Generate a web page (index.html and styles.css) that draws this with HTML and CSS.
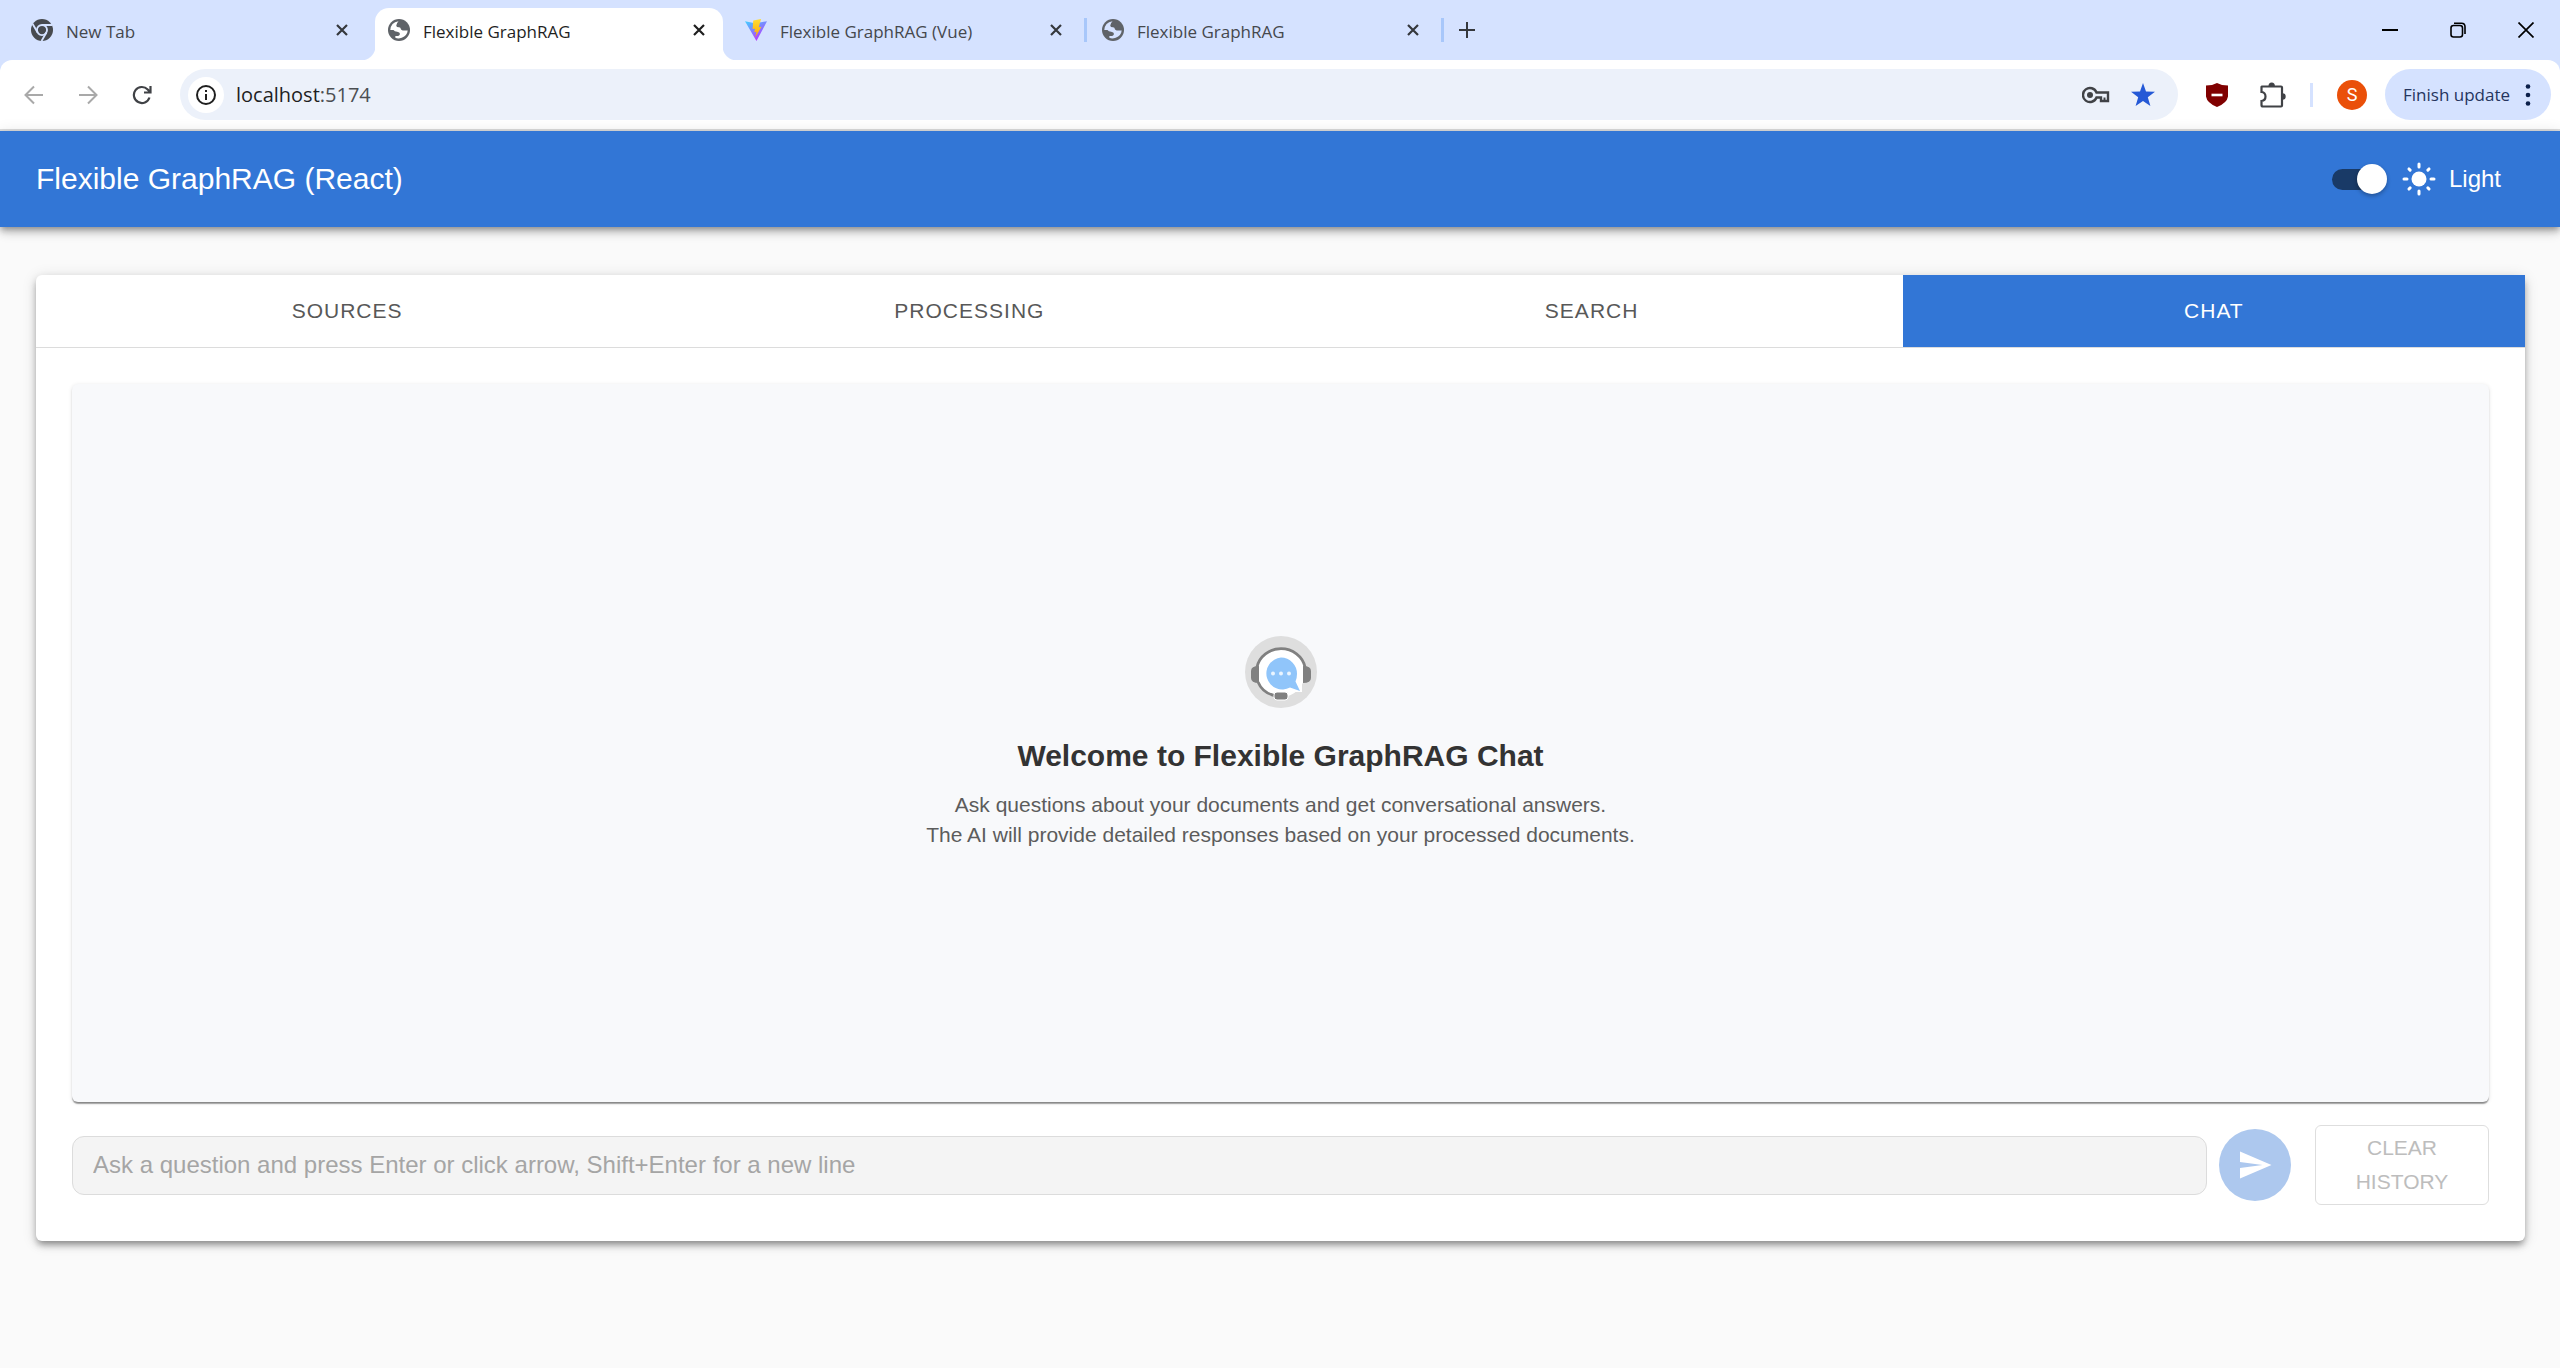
FILE: index.html
```html
<!DOCTYPE html>
<html lang="en">
<head>
<meta charset="utf-8">
<title>Flexible GraphRAG</title>
<link rel="stylesheet" href="styles.css">
</head>
<body>
<svg width="0" height="0" class="defs" aria-hidden="true">
  <defs>
    <symbol id="close" viewBox="0 0 12 12"><path d="M1 1l10 10M11 1L1 11" fill="none" stroke="currentColor" stroke-width="2.200"/></symbol>
    <symbol id="globe" viewBox="0 0 24 24"><circle cx="12" cy="12" r="12" fill="#5f6368"/><path class="sea" d="M2.500 12Q3 4 11.500 2.500 9 5 9 7q0 2 3 2 2 0 2 2 0 1 2 1.500l5.500 0Q21 18 15 20.500q-4 1.500-7 0v-2q5 .5 5-2.500 0-1.500-3-2-3 0-4-2z"/></symbol>
  </defs>
</svg>
<div class="tabstrip">
  <div class="tab">
    <svg class="fav" viewBox="0 0 24 24"><circle cx="12" cy="12" r="12" fill="#474a4f"/><circle cx="12" cy="12" r="5.500" fill="#474a4f" stroke="#d5e2ff" stroke-width="2"/><path d="M12 6.500h11M7.200 14.800L1.800 5.500M16.800 14.800L11.500 24" stroke="#d5e2ff" stroke-width="2" fill="none"/></svg>
    <span class="tab-title">New Tab</span>
    <button class="icon-btn" aria-label="Close tab"><svg class="x"><use href="#close"/></svg></button>
  </div>
  <div class="tab active">
    <svg class="fav"><use href="#globe"/></svg>
    <span class="tab-title">Flexible GraphRAG</span>
    <button class="icon-btn" aria-label="Close tab"><svg class="x"><use href="#close"/></svg></button>
  </div>
  <div class="tab divided">
    <svg class="fav" viewBox="0 0 24 24"><defs><linearGradient id="va" x1="0" y1="0" x2=".6" y2="1"><stop offset="0" stop-color="#41d1ff"/><stop offset="1" stop-color="#bd34fe"/></linearGradient><linearGradient id="vb" x1="0" y1="0" x2="0" y2="1"><stop offset="0" stop-color="#ffdd35"/><stop offset="1" stop-color="#ffa800"/></linearGradient></defs><path d="M0 2.500l11 2L24 2.500 12.500 24z" fill="url(#va)"/><path d="M17.500 0L9 1.700 8.300 11l2.700-.5-.9 4 2.500-.7-1.400 6L18 8.500l-3 .5 2.500-9z" fill="url(#vb)"/></svg>
    <span class="tab-title">Flexible GraphRAG (Vue)</span>
    <button class="icon-btn" aria-label="Close tab"><svg class="x"><use href="#close"/></svg></button>
  </div>
  <div class="tab divided">
    <svg class="fav"><use href="#globe"/></svg>
    <span class="tab-title">Flexible GraphRAG</span>
    <button class="icon-btn" aria-label="Close tab"><svg class="x"><use href="#close"/></svg></button>
  </div>
  <button class="icon-btn new-tab" aria-label="New tab"><svg width="16" height="16" viewBox="0 0 16 16"><path d="M8 0v16M0 8h16" stroke="#35383d" stroke-width="2"/></svg></button>
  <div class="window-controls">
    <button class="icon-btn" aria-label="Minimize"><svg width="16" height="16" viewBox="0 0 16 16"><path d="M0 8h16" stroke="#000" stroke-width="2"/></svg></button>
    <button class="icon-btn" aria-label="Restore"><svg width="16" height="16" viewBox="0 0 16 16"><g fill="none" stroke="#000" stroke-width="1.600"><rect x="1" y="3.500" width="11.500" height="11.500" rx="2.500"/><path d="M4 1.200h7.500q3.500 0 3.500 3.500V12"/></g></svg></button>
    <button class="icon-btn" aria-label="Close window"><svg width="16" height="16" viewBox="0 0 16 16"><path d="M.5.5l15 15M15.500.5l-15 15" stroke="#000" stroke-width="1.700"/></svg></button>
  </div>
</div>
<div class="toolbar">
  <nav class="nav-buttons" aria-label="History">
    <button class="icon-btn" aria-label="Back"><svg width="20" height="20" viewBox="0 0 20 20"><path d="M19 10H2M10 1.500L1.500 10l8.500 8.500" fill="none" stroke="#a9a9a9" stroke-width="2"/></svg></button>
    <button class="icon-btn" aria-label="Forward"><svg width="20" height="20" viewBox="0 0 20 20"><path d="M1 10h17M10 1.500l8.500 8.500-8.500 8.500" fill="none" stroke="#a9a9a9" stroke-width="2"/></svg></button>
    <button class="icon-btn" aria-label="Reload"><svg width="20" height="20" viewBox="0 0 20 20"><path d="M17.500 12.500A8 8 0 1 1 15.700 4.500L18 7M18.500 1v6.500H12" fill="none" stroke="#404246" stroke-width="2.200"/></svg></button>
  </nav>
  <div class="address">
    <span class="site-info"><svg width="20" height="20" viewBox="0 0 20 20"><circle cx="10" cy="10" r="9" fill="none" stroke="#1f1f1f" stroke-width="2"/><path d="M10 9v6M10 5v2" stroke="#1f1f1f" stroke-width="2"/></svg></span>
    <span class="url">localhost<span>:5174</span></span>
    <svg width="28" height="18" viewBox="0 0 28 18"><path d="M14.500 6.500a7 7 0 1 0 0 5H19V15h7V6.500z" fill="none" stroke="#404246" stroke-width="2.400"/><circle cx="8" cy="9" r="3" fill="#404246"/><path d="M22.500 15v-3.500" stroke="#404246" stroke-width="2"/></svg>
    <svg class="star" width="24" height="24" viewBox="0 0 24 24"><path d="M12 0l3 8.600 9 .2-7.200 5.500L19.400 23 12 17.900 4.600 23l2.600-8.700L0 8.800l9-.2z" fill="#2559d6"/></svg>
  </div>
  <div class="extensions">
    <svg width="22" height="24" viewBox="0 0 22 24"><path d="M11 0q4.500 2.500 11 2.500v11Q21 20 11 24 1 20 0 13.500v-11Q6.500 2.500 11 0z" fill="#800000"/><path d="M5.500 12h11" stroke="#fff" stroke-width="2.600"/></svg>
    <svg width="26" height="26" viewBox="0 0 26 26"><path d="M2 4.500h19a1 1 0 0 1 1 1v18a1 1 0 0 1-1 1H3a1.500 1.500 0 0 1-1.500-1.500V19q4-.5 4-4.500t-4-4.500V5z" fill="none" stroke="#404246" stroke-width="2.200"/><path d="M8.500 4a3.200 3.500 0 0 1 6.400 0zM22.500 11.300a3.200 3.200 0 0 1 0 6.400z" fill="#404246"/></svg>
    <span class="rule"></span>
    <span class="avatar">S</span>
    <button class="update">Finish update <svg width="6" height="22" viewBox="0 0 6 22"><g fill="#0b1f4a"><circle cx="3" cy="2.500" r="2.300"/><circle cx="3" cy="11" r="2.300"/><circle cx="3" cy="19.500" r="2.300"/></g></svg></button>
  </div>
</div>
<header class="appbar">
  <h1>Flexible GraphRAG (React)</h1>
  <label class="theme">
    <input type="checkbox" class="switch" checked>
    <svg width="36" height="36" viewBox="0 0 24 24"><circle cx="12" cy="12" r="5" fill="#fff"/><path d="M12 2v2M12 20v2M2 12h2M20 12h2M5.300 5.300l.8.8M17.900 17.900l.8.8M5.300 18.700l.8-.8M17.900 6.100l.8-.8" stroke="#fff" stroke-width="2" stroke-linecap="round"/></svg>
    <span>Light</span>
  </label>
</header>
<main class="card">
  <div class="sections" role="tablist">
    <button role="tab">SOURCES</button>
    <button role="tab">PROCESSING</button>
    <button role="tab">SEARCH</button>
    <button role="tab" aria-selected="true" class="selected">CHAT</button>
  </div>
  <div class="panel">
    <section class="conversation">
      <svg class="bot" viewBox="0 0 72 72"><circle cx="36" cy="36" r="36" fill="#dedede"/><circle cx="36" cy="37" r="24" fill="#fff"/><path d="M44 56h13V44z" fill="#fff"/><path d="M12 31a24.500 23 0 0 1 48 0M13 46q5 12 19 14" fill="none" stroke="#808080" stroke-width="2.800"/><path d="M14 30v17q-8 0-8-5v-7q0-5 8-5zM58 30v17q8 0 8-5v-7q0-5-8-5z" fill="#808080"/><rect x="29" y="56" width="14" height="8" rx="3" fill="#808080" stroke="#fff" stroke-width="1"/><path d="M36 21.500a16.300 16.300 0 0 1 16 16.500q0 4-1.500 7.500L55 55l-10-3.500a16 16 0 1 1-9-30z" fill="#90c5fa"/><g fill="#eaf5ff"><circle cx="28" cy="37.500" r="2"/><circle cx="36" cy="37.500" r="2"/><circle cx="44" cy="37.500" r="2"/></g></svg>
      <h2>Welcome to Flexible GraphRAG Chat</h2>
      <p>Ask questions about your documents and get conversational answers.<br>The AI will provide detailed responses based on your processed documents.</p>
    </section>
    <form class="composer">
      <input type="text" aria-label="Question" placeholder="Ask a question and press Enter or click arrow, Shift+Enter for a new line" disabled>
      <button type="submit" class="send" aria-label="Send" disabled><svg width="36" height="36" viewBox="0 0 24 24"><path d="M2.010 21L23 12 2.010 3 2 10l15 2-15 2z" fill="#fff"/></svg></button>
      <button type="button" class="clear" disabled>CLEAR HISTORY</button>
    </form>
  </div>
</main>
</body>
</html>
```
FILE: styles.css
```css
* { box-sizing: border-box; }
body { margin: 0; min-height: 100vh; background: #fafafa; font-family: "Liberation Sans", Arial, sans-serif; }
button { font: inherit; margin: 0; border: 0; background: none; color: inherit; }
svg { display: block; flex: none; }
.defs { position: absolute; }
.icon-btn { display: flex; align-items: center; justify-content: center; padding: 0; }

/* Browser chrome */
.tabstrip { display: flex; align-items: center; height: 60px; padding-left: 18px; background: #d5e2ff; font-family: "Open Sans", "Noto Sans", sans-serif; font-size: 17px; color: #45484d; }
.tab { --tab-bg: #d5e2ff; position: relative; display: flex; align-items: center; width: 357px; height: 60px; padding: 0 26px 0 13px; gap: 13px; }
.tab .icon-btn { width: 14px; height: 14px; margin-left: auto; color: #35383d; }
.tab-title { padding-top: 2px; }
.fav { width: 22px; height: 22px; }
.sea { fill: var(--tab-bg); }
.x { width: 12px; height: 12px; }
.tab.active { --tab-bg: #fff; width: 348px; margin-right: 9px; height: 52px; margin-top: 8px; padding: 0 17px 8px 13px; background: #fff; border-radius: 14px 14px 0 0; color: #1f1f1f; }
.tab.active .icon-btn { color: #1f1f1f; }
.tab.active::before, .tab.active::after { content: ""; position: absolute; bottom: 0; width: 14px; height: 14px; }
.tab.active::before { right: 100%; background: radial-gradient(circle at 0 0, transparent 14px, #fff 15px); }
.tab.active::after { left: 100%; background: radial-gradient(circle at 100% 0, transparent 14px, #fff 15px); }
.tab.divided::after { content: ""; position: absolute; right: 2px; top: 18px; width: 3px; height: 24px; background: #a8c7fa; }
.new-tab { width: 20px; height: 20px; margin-left: 11px; }
.window-controls { display: flex; gap: 52px; margin-left: auto; padding-right: 26px; }
.toolbar { display: flex; align-items: center; height: 71px; padding: 0 9px 0 0; border-bottom: 2px solid #dedede; background: #fff; border-radius: 12px 12px 0 0; box-shadow: 0 -12px 0 #d5e2ff; }
.nav-buttons { display: flex; gap: 34px; padding: 0 28px 0 24px; }
.address { display: flex; align-items: center; flex: 1; height: 51px; padding: 0 23px 0 8px; border-radius: 26px; background: #ecf1fa; }
.site-info { display: flex; align-items: center; justify-content: center; width: 36px; height: 36px; border-radius: 50%; background: #fff; }
.url { flex: 1; padding-left: 12px; font: 20px "Open Sans", "Noto Sans", sans-serif; color: #1f1f1f; }
.url span { color: #4b4e52; }
.star { margin-left: 21px; }
.extensions { display: flex; align-items: center; padding-left: 28px; }
.extensions > svg + svg { margin-left: 32px; }
.rule { width: 3px; height: 24px; margin: 0 24px; background: #d5e2ff; }
.avatar { width: 30px; height: 30px; border-radius: 50%; background: #ea5009; color: #fff; font: 18px/30px Roboto, sans-serif; text-align: center; }
.update { display: flex; align-items: center; justify-content: space-between; width: 166px; height: 51px; margin-left: 18px; padding: 0 20px 0 18px; border-radius: 26px; background: #d5e2ff; color: #25355e; font: 17px "Open Sans", "Noto Sans", sans-serif; white-space: nowrap; }

/* Application */
.appbar { display: flex; align-items: center; justify-content: space-between; height: 96px; padding: 0 59px 0 36px; background: #3276d6; color: #fff; box-shadow: 0 3px 6px -1px rgba(0,0,0,.3), 0 6px 8px rgba(0,0,0,.14), 0 2px 15px rgba(0,0,0,.12); }
h1 { margin: 0; font-size: 30px; font-weight: 400; line-height: 48px; }
.theme { display: flex; align-items: center; font-size: 24px; }
.theme svg { margin: 0 12px 0 14px; }
.switch { appearance: none; position: relative; width: 52px; height: 21px; margin: 0 3px 0 0; border-radius: 11px; background: #193a67; }
.switch::after { content: ""; position: absolute; right: -3px; top: -5px; width: 30px; height: 30px; border-radius: 50%; background: #fff; box-shadow: 0 2px 4px rgba(0,0,0,.3); }
.card { margin: 48px 35px 48px 36px; background: #fff; border-radius: 6px; box-shadow: 0 5px 6px -2px rgba(0,0,0,.3), 0 4px 8px rgba(0,0,0,.16), 0 2px 15px rgba(0,0,0,.12); }
.sections { display: grid; grid-template-columns: repeat(4, 1fr); border-bottom: 1px solid #dcdcdc; }
.sections button { height: 72px; color: #585858; font-size: 21px; letter-spacing: 1px; }
.sections .selected { background: #3276d6; color: #fff; }
.panel { padding: 36px; }
.conversation { display: flex; flex-direction: column; align-items: center; justify-content: center; height: 718px; border-radius: 6px; background: #f8f9fb; text-align: center; box-shadow: 0 3px 2px -2px rgba(0,0,0,.3), 0 2px 1px rgba(0,0,0,.25), 0 1px 4px rgba(0,0,0,.12); }
.bot { width: 72px; height: 72px; }
h2 { margin: 24px 0 10px; color: #333; font-size: 30px; line-height: 48px; }
.conversation p { margin: 0; color: #5c5c5c; font-size: 21px; line-height: 30px; }
.composer { display: flex; align-items: center; margin-top: 23px; }
.composer input { flex: 1; height: 59px; padding: 0 20px; border: 1px solid #dcdcdc; border-radius: 12px; background: #f4f4f4; font: 24px "Liberation Sans", Arial, sans-serif; }
.composer input::placeholder { color: #a5a5a5; opacity: 1; }
.send { display: flex; align-items: center; justify-content: center; width: 72px; height: 72px; margin: 0 24px 0 12px; padding: 0; border-radius: 50%; background: #adc8ee; }
.clear { width: 174px; padding: 5px 23px; border: 1px solid #dedede; border-radius: 6px; color: #bdbdbd; font-size: 21px; line-height: 34px; }
```
